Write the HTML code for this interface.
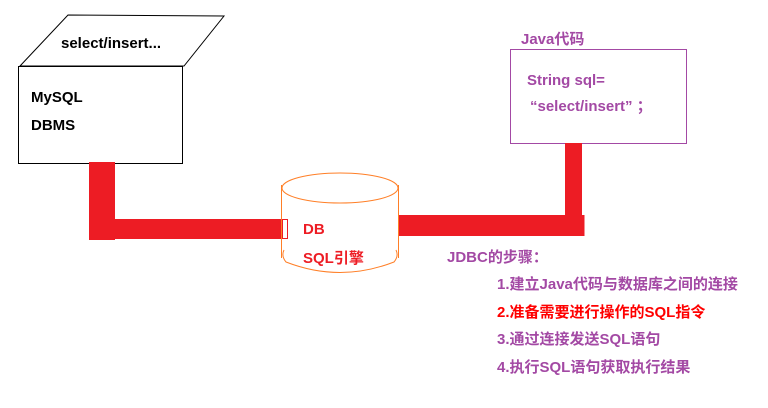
<!DOCTYPE html><html><head><meta charset="utf-8"><style>
body{margin:0;background:#fff;width:768px;height:403px;overflow:hidden}
text{font-family:"Liberation Sans","Noto Sans CJK SC",sans-serif;font-weight:bold;font-size:15px}
</style></head><body>
<svg width="768" height="403" xmlns="http://www.w3.org/2000/svg">
<polygon points="20,66 68,15 224,16 184,66" fill="#fff" stroke="#000" stroke-width="1"/>
<rect x="18.5" y="66.5" width="164" height="97" fill="#fff" stroke="#000"/>
<text x="61" y="48" fill="#000" font-size="16.5">select/insert...</text>
<text x="31" y="102" fill="#000" font-size="16.5">MySQL</text>
<text x="31" y="130" fill="#000" font-size="16.5">DBMS</text>
<rect x="89" y="162" width="26" height="78" fill="#ed1c24"/>
<rect x="89" y="219" width="199" height="20" fill="#ed1c24"/>
<rect x="282.5" y="219.5" width="5" height="19" fill="#fff" stroke="#ed1c24"/>
<rect x="398" y="215" width="186" height="21" fill="#ed1c24"/>
<rect x="565" y="143" width="17" height="93" fill="#ed1c24"/>
<rect x="581.5" y="215.5" width="2.5" height="20" fill="none" stroke="#ed1c24"/>
<g fill="none" stroke="#ff7f27" stroke-width="1">
<ellipse cx="340" cy="188" rx="58" ry="15"/>
<line x1="281.5" y1="185" x2="281.5" y2="258"/>
<line x1="398.5" y1="185" x2="398.5" y2="258"/>
<path d="M284,250 Q281,256 286,262 Q340,283 394,262 Q399,256 396,250"/>
</g>
<text x="303" y="234" fill="#ed1c24" font-size="16.5">DB</text>
<text x="303" y="263" fill="#ed1c24" font-size="16.5">SQL引擎</text>
<rect x="510.5" y="49.5" width="176" height="94" fill="none" stroke="#a349a4"/>
<text x="521" y="44" fill="#a349a4">Java代码</text>
<text x="527" y="85" fill="#a349a4" font-size="16.5">String sql=</text>
<text x="530" y="111" fill="#a349a4" font-size="16.5">“select/insert” ；</text>
<rect x="565" y="143" width="17" height="7" fill="#ed1c24"/>
<text x="447" y="262" fill="#a349a4" font-size="16">JDBC的步骤：</text>
<text x="497" y="289" fill="#a349a4">1.建立Java代码与数据库之间的连接</text>
<text x="497" y="317" fill="#ff0000">2.准备需要进行操作的SQL指令</text>
<text x="497" y="344" fill="#a349a4">3.通过连接发送SQL语句</text>
<text x="497" y="372" fill="#a349a4">4.执行SQL语句获取执行结果</text>
</svg>
</body></html>
